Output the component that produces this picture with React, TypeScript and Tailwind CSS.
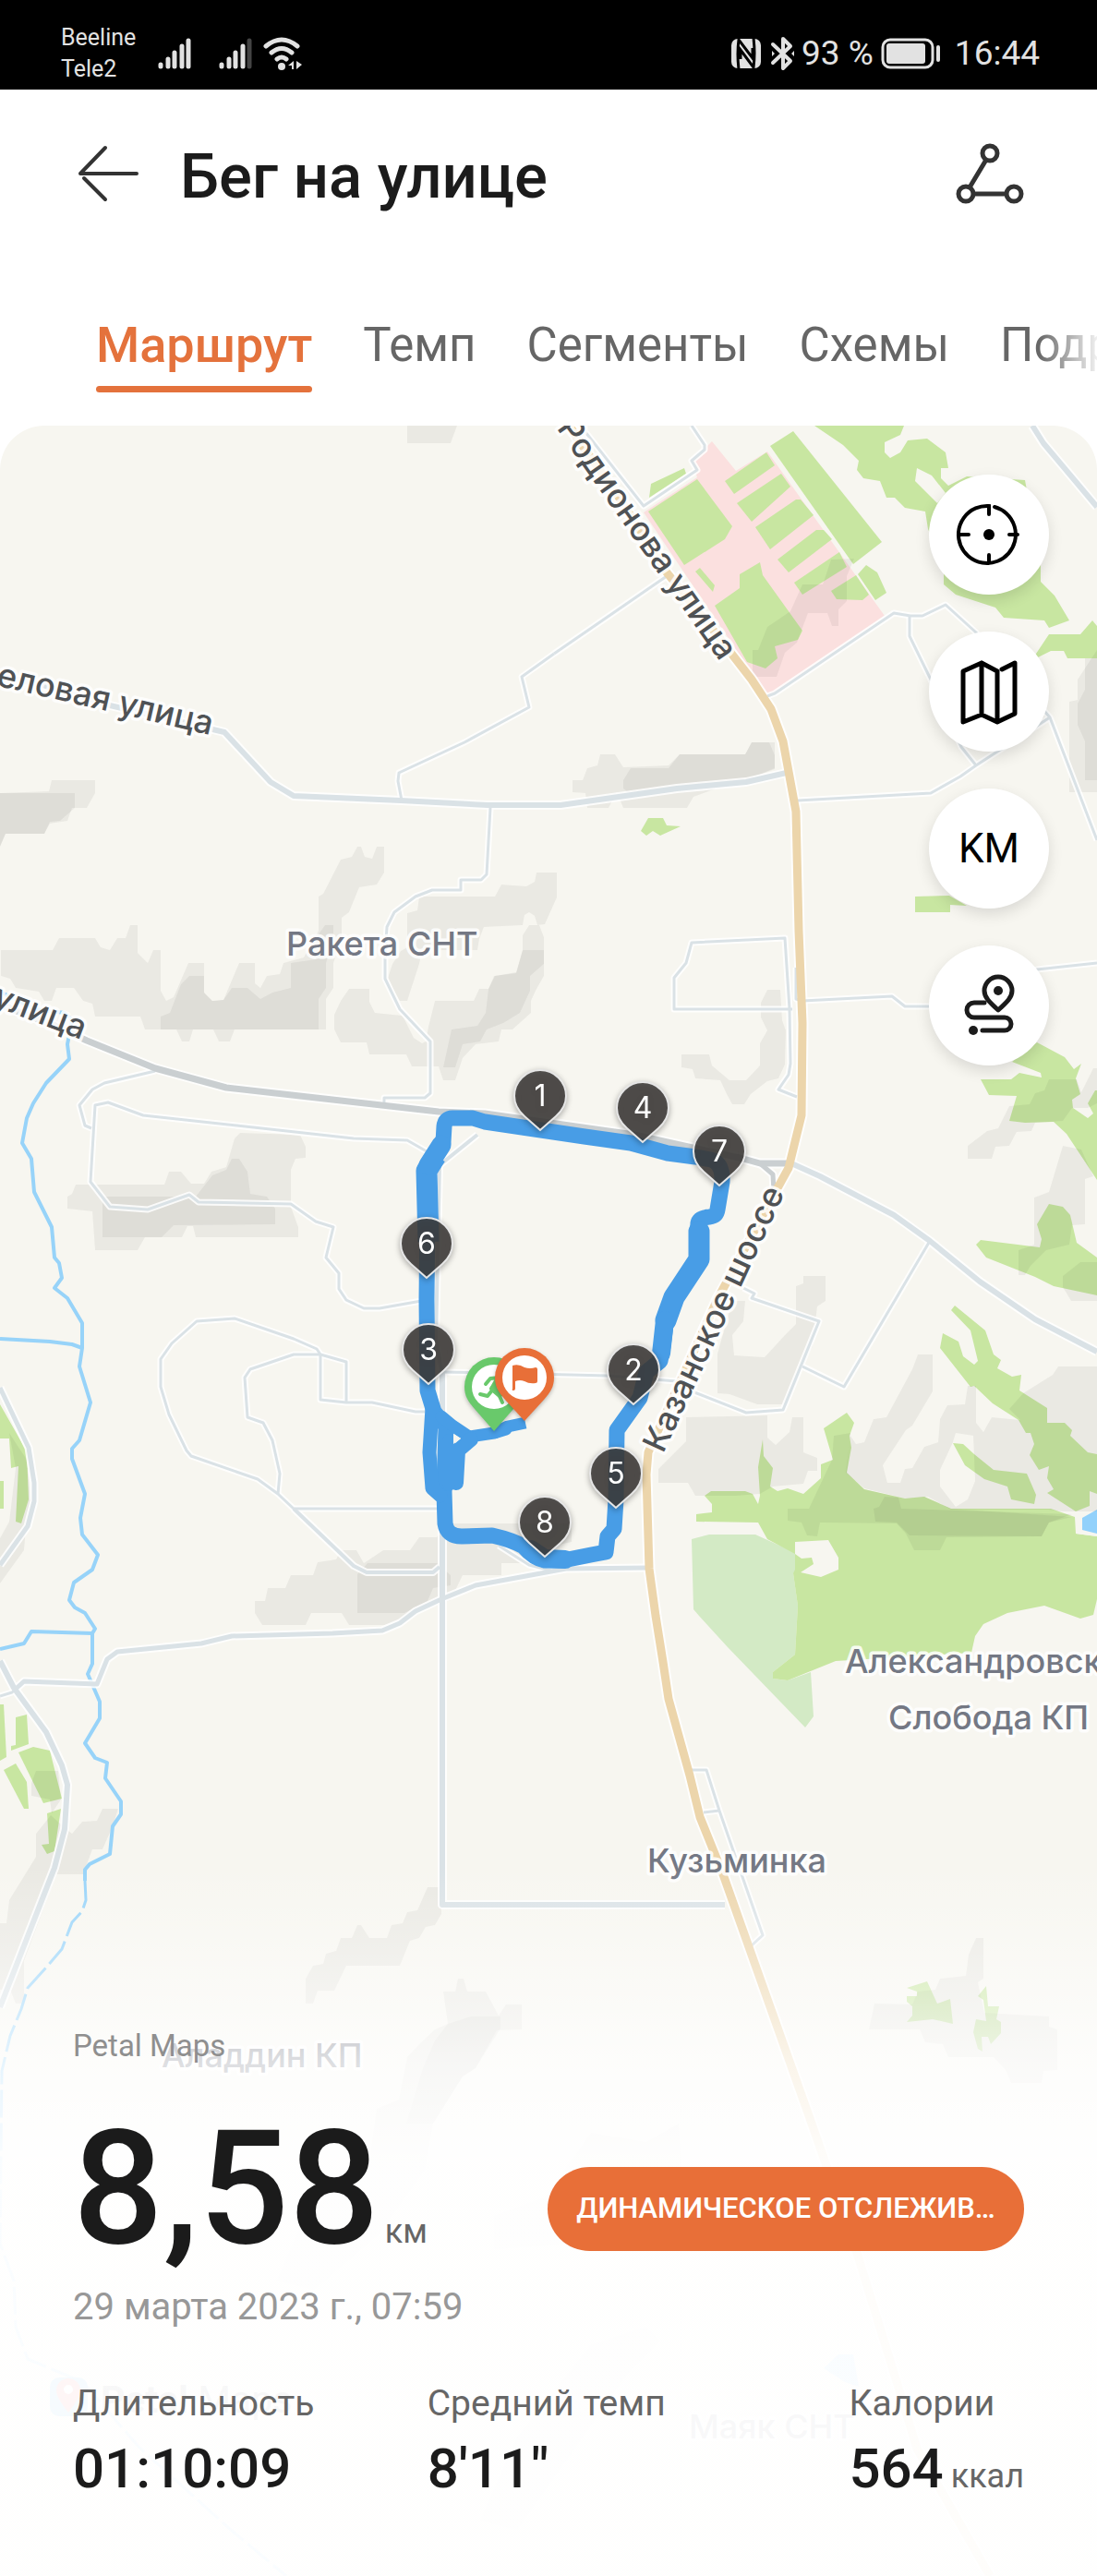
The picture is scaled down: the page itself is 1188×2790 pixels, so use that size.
import React from "react";

type Road = { points: string; width: number; color: string };

const MINOR = "#dae2e6";
const GRAY = "#cacfd1";
const TRUNK = "#ecd5ab";
const GREEN = "#c8e6a1";
const LAND = "#f7f6f0";

const parks: string[] = [
  "702,554 755,519 793,570 785,584 741,612",
  "703,539 705,524 741,507 743,513",
  "785,521 830,490 839,504 795,535",
  "798,545 846,513 856,527 814,565",
  "818,571 862,541 867,541 881,558 834,595",
  "842,606 884,574 892,574 901,584 854,620",
  "860,631 909,598 917,614 869,644",
  "900,640 927,623 941,644 934,650 906,649",
  "929,622 938,612 950,620 960,642 948,650",
  "834,483 859,467 955,587 924,611",
  "753,619 758,615 774,634 772,641",
  "774,656 801,637 801,622 823,609 826,623 869,683 864,693 839,700 842,713 829,724 809,717",
  "882,461 979,461 975,471 958,479 958,490 964,496 975,490 983,477 1004,475 1024,490 1027,507 1019,507 1019,518 1027,526 1047,516 1110,520 1127,614 1127,630 1142,645 1158,672 1136,680 1131,672 1087,669 1078,658 1035,644 1022,633 1022,610 1005,573 1002,554 980,550 969,539 960,539 953,521 935,518 928,509 930,499 913,482",
  "1120,711 1136,687 1170,687 1183,672 1188,678 1188,713 1156,713 1152,705 1138,705 1124,712",
  "694,900 702,886 718,886 722,894 737,895 715,905 707,900 700,905",
  "991,971 1028,970 1047,981 1029,980 1029,988 991,988",
  "0,1521 29,1572 31,1624 23,1650 17,1648 20,1588 12,1590 10,1558 0,1558",
  "0,1604 4,1604 4,1634 0,1634",
  "0,1846 4,1846 7,1903 0,1907",
  "17,1860 29,1857 31,1889 12,1896 12,1891 17,1890",
  "20,1898 36,1892 54,1896 67,1948 47,1953",
  "4,1917 17,1910 29,1930 31,1959 26,1959",
  "51,1964 66,1959 59,2005 51,2008 45,1998 53,1997",
  "1096,1150 1123,1129 1153,1145 1163,1158 1171,1152 1165,1168 1170,1185 1161,1191 1162,1200 1178,1211 1184,1206 1178,1195 1186,1181 1188,1181 1188,1278 1155,1228 1141,1215 1110,1216 1093,1214 1101,1187 1071,1186 1062,1169 1095,1169 1104,1162 1128,1167 1127,1162",
  "1057,1348 1062,1343 1126,1351 1128,1342 1123,1326 1136,1304 1151,1307 1159,1316 1166,1346 1188,1362 1188,1403 1141,1393 1121,1383 1068,1362",
  "1030,1419 1034,1414 1067,1441 1076,1467 1084,1473 1080,1482 1096,1491 1106,1489 1104,1506 1134,1525 1134,1541 1153,1541 1161,1549 1159,1555 1178,1573 1188,1575 1188,1618 1180,1615 1180,1631 1165,1637 1134,1617 1141,1613 1134,1601 1136,1588 1125,1592 1115,1576 1120,1564 1116,1552 1111,1552 1103,1538 1075,1520 1055,1501 1051,1502 1018,1460 1021,1444 1038,1453 1043,1469 1055,1478 1059,1474 1051,1441",
  "1032,1563 1043,1564 1055,1575 1076,1592 1112,1596 1122,1619 1120,1629 1095,1624 1091,1610 1066,1602 1045,1587",
  "763,1620 770,1615 807,1615 815,1618 821,1629 823,1620 821,1589 826,1559 827,1577 837,1590 834,1610 842,1615 853,1612 870,1618 889,1601 889,1586 902,1581 892,1547 917,1530 925,1541 920,1555 922,1568 917,1595 936,1613 980,1623 1001,1621 1030,1634 1138,1634 1164,1643 1165,1661 1188,1664 1188,1732 1184,1749 1170,1753 1131,1739 1091,1747 1065,1759 1056,1772 1052,1790 955,1796 905,1799 853,1820 837,1818 837,1811 861,1792 864,1739 859,1704 861,1700 861,1683 831,1667 821,1649 754,1648 754,1640 771,1638 771,1629",
  "982,2153 1004,2146 1015,2170 1029,2165 1032,2192 1010,2187 982,2190 988,2183 988,2173 982,2168 982,2162 993,2162 993,2157",
  "1059,2162 1068,2151 1070,2173 1082,2173 1079,2187 1084,2190 1084,2202 1073,2214 1070,2206 1063,2206 1064,2222 1059,2219 1054,2201 1057,2187 1068,2189 1065,2166",
];

const clearings: string[] = [
  "993,507 1009,515 1024,534 1015,545 991,521",
  "861,1670 897,1668 908,1687 908,1700 889,1708 867,1703 881,1694 879,1687 868,1688 861,1683",
];

const reliefs: string[] = [
  "441,461 495,461 488,480 441,480",
  "815,704 821,704 831,679 856,662 869,633 891,633 900,606 925,605 917,624 917,651 908,660 908,678 901,678 896,664 875,664 863,696 850,707 841,733 815,733",
  "1188,704 1167,736 1167,758 1158,760 1158,858 1188,858",
  "1175,713 1175,747 1167,762 1167,785 1175,803 1175,845 1188,845 1188,713",
  "620,845 631,845 636,832 647,829 650,817 666,817 675,831 724,829 736,817 807,817 814,804 839,804 839,833 802,847 770,856 751,863 744,875 675,875 668,858 659,875 636,875 634,859 620,858",
  "675,845 683,832 724,832 736,817 807,817 814,804 833,804 839,818 839,832 802,847 733,854 680,858 675,854",
  "56,845 103,845 103,859 94,875 78,875 73,889 54,892 48,903 6,903 0,917 0,859 53,857",
  "0,859 81,859 81,875 65,889 54,890 48,903 6,903 0,917 0,875",
  "1,1029 57,1029 64,1016 103,1016 109,1026 119,1029 127,1016 136,1016 141,1002 149,1002 149,1032 160,1043 166,1029 174,1029 174,1073 180,1084 188,1080 204,1043 221,1043 221,1075 230,1084 242,1083 259,1043 276,1043 276,1065 282,1070 289,1057 303,1055 307,1043 329,1037 345,1008 345,971 350,968 369,931 381,928 387,917 391,917 395,928 403,930 408,917 416,917 416,945 408,958 389,961 378,988 370,994 370,1017 361,1043 361,1070 353,1082 353,1115 254,1115 249,1128 237,1128 231,1115 209,1115 205,1128 197,1128 191,1115 157,1115 152,1101 103,1101 100,1087 90,1084 80,1070 61,1070 56,1084 48,1084 42,1074 17,1070 11,1060 1,1057",
  "174,1101 184,1097 196,1066 205,1057 221,1057 221,1075 230,1084 242,1083 251,1070 268,1070 282,1082 295,1075 315,1070 315,1043 342,1039 342,1016 352,1002 361,1002 361,1017 353,1043 353,1070 345,1082 345,1115 174,1115",
  "441,989 452,986 454,971 536,971 543,958 570,960 579,955 581,945 603,945 603,972 590,1001 582,1002 579,992 573,988 568,991 566,1002 524,1004 519,1017 517,1029 457,1029 454,1044 441,1084 433,1084 425,1071 420,1059 425,1044 434,1030 441,1026",
  "566,1029 566,1013 573,1002 584,1002 589,1015 589,1057 580,1073 575,1084 575,1097 555,1115 543,1115 540,1128 515,1131 501,1146 493,1170 480,1170 475,1155 446,1155 440,1142 400,1142 397,1129 369,1129 362,1115 362,1099 369,1084 378,1071 400,1071 400,1085 406,1097 436,1100 448,1124 457,1130 461,1128 464,1112 471,1084 513,1084 519,1071 529,1071 535,1057 559,1054",
  "566,1029 589,1029 589,1044 574,1057 574,1073 563,1097 545,1108 527,1115 520,1128 501,1131 493,1156 480,1156 489,1115 517,1111 526,1097 529,1071 536,1057 559,1053",
  "831,1072 845,1072 847,1105 851,1116 850,1153 843,1168 831,1171 813,1185 806,1196 793,1196 787,1185 780,1170 753,1168 750,1158 738,1156 738,1142 768,1142 771,1154 790,1170 808,1170 823,1154 823,1130 831,1116 824,1102 824,1086",
  "73,1296 78,1293 82,1283 178,1283 183,1269 196,1269 207,1282 221,1282 229,1269 245,1264 254,1233 260,1227 325,1229 331,1242 331,1254 320,1255 315,1267 315,1307 323,1329 323,1340 212,1340 209,1328 203,1328 197,1340 157,1340 149,1354 103,1354 100,1312 73,1309",
  "111,1296 212,1296 230,1273 245,1267 251,1255 259,1255 268,1269 271,1293 289,1296 298,1309 298,1326 188,1327 175,1340 111,1340",
  "10,1552 29,1581 33,1626 28,1655 26,1679 0,1715 0,1666 10,1648 17,1590",
  "276,1734 287,1734 290,1720 309,1720 315,1706 339,1706 344,1692 364,1689 369,1679 386,1679 394,1693 415,1679 444,1679 454,1665 473,1665 482,1650 619,1650 619,1670 574,1680 574,1693 543,1693 543,1706 501,1706 488,1733 444,1750 417,1760 378,1760 370,1747 337,1747 331,1760 284,1760 276,1747",
  "387,1705 387,1747 438,1747 463,1734 469,1720 488,1717 488,1706 473,1693 398,1693",
  "39,1918 63,1918 66,1949 56,1964 54,1949 34,1945 34,1931",
  "55,1966 66,1976 78,1986 89,1973 105,1972 111,1959 128,1959 122,1978 111,2003 100,2003 90,2030 61,2030 26,2124 26,2170 17,2170 11,2155 0,2155 0,2083 7,2083 10,2058 39,2011 39,1986",
  "463,2044 478,2044 478,2073 471,2085 461,2087 454,2099 444,2102 433,2129 375,2129 362,2156 344,2156 339,2170 331,2170 331,2143 339,2129 350,2127 353,2116 364,2113 369,2099 381,2099 387,2085 391,2085 400,2099 419,2099 424,2085 436,2083 441,2071 452,2069",
  "480,2157 493,2157 496,2143 502,2143 506,2157 526,2157 540,2183 548,2171 565,2171 565,2198 538,2199 515,2240 501,2249 469,2300 460,2350 410,2420 340,2480 300,2470 330,2400 400,2340 408,2284 432,2274 441,2228 455,2213 471,2198 485,2192",
  "485,2192 510,2184 542,2184 542,2197 515,2240 501,2249 469,2300 440,2300 458,2240 471,2210",
  "1048,1241 1069,1225 1081,1222 1093,1198 1115,1196 1121,1184 1131,1181 1136,1169 1166,1169 1171,1183 1184,1157 1188,1157 1188,1195 1178,1200 1161,1200 1151,1214 1121,1216 1117,1225 1101,1226 1093,1241 1078,1242 1074,1255 1048,1255",
  "1151,1241 1171,1245 1184,1274 1175,1277 1175,1326 1161,1327 1158,1348 1133,1354 1116,1371 1110,1381 1103,1381 1103,1354 1120,1348 1120,1297 1136,1291",
  "1151,1382 1170,1367 1188,1367 1188,1409 1160,1409 1151,1394",
  "793,1409 807,1409 805,1431 793,1446 795,1468 828,1470 850,1446 862,1434 862,1393 870,1390 870,1382 894,1382 894,1409 885,1415 880,1458 867,1486 853,1521 820,1521 790,1510 777,1509 777,1466",
  "713,1591 743,1561 743,1535 788,1534 831,1533 831,1557 840,1565 855,1551 858,1535 870,1535 870,1573 885,1579 885,1593 875,1593 870,1607 837,1610 823,1618 797,1620 753,1620 745,1606 713,1606",
  "853,1634 876,1634 901,1581 903,1555 921,1552 917,1595 936,1613 980,1623 1001,1621 1030,1634 1161,1643 1136,1649 1128,1664 1025,1665 1018,1679 990,1679 981,1661 971,1650 888,1649 885,1664 874,1663 868,1649 853,1647",
  "946,1634 952,1632 958,1621 973,1622 976,1634 1161,1640 1136,1649 1128,1664 985,1663 971,1649 948,1648",
  "1057,2099 1065,2099 1065,2143 1059,2147 1066,2180 1136,2184 1136,2195 1145,2198 1145,2242 1130,2243 1128,2256 1095,2256 1089,2242 1076,2228 1027,2228 1021,2214 1002,2212 996,2198 941,2198 947,2170 988,2171 994,2157 1013,2155 1018,2143 1046,2140 1049,2117",
  "640,2310 700,2320 735,2300 738,2350 700,2360 620,2430 535,2436 535,2400 590,2380",
  "640,2540 700,2520 715,2535 680,2570 560,2740 520,2730 560,2640",
];

const reliefWithGap =
  "M994 1467H1010V1507L988 1544L981 1549L956 1587L961 1606H975L980 1591L988 1590L1001 1567L1016 1562L1018 1537L1026 1522L1045 1521L1048 1501H1057V1541L1065 1551L1074 1535L1105 1538L1093 1526L1108 1509L1140 1489L1146 1480H1188V1637H1150L1135 1635H1030L1005 1621L980 1623L936 1612L916 1595L921 1555L927 1564L936 1562L946 1537L960 1535L988 1483ZM1035 1552L1032 1562L1018 1592V1610L1035 1632L1048 1624L1056 1604L1054 1555Z";

const rivers: string[] = [
  "0,1074 38,1093 70,1097 78,1105 73,1131 75,1147 50,1173 36,1195 29,1211 24,1238 34,1255 37,1291 56,1329 59,1362 64,1368 67,1384 59,1395 73,1406 89,1433 89,1460 86,1480 98,1519 86,1560 78,1569 78,1580 92,1618 87,1644 89,1662 106,1684 100,1700 80,1714 75,1733 81,1741 92,1747 103,1764 100,1769 100,1802 95,1813 108,1843 108,1861 92,1888 103,1904 116,1909 114,1926 131,1951 131,1965 122,1978 119,2008 97,2019 92,2025 92,2037",
  "0,1450 54,1453 78,1456 89,1460",
  "0,1786 26,1780 34,1767 100,1769",
];

const fadingRiver =
  "92,2037 93,2058 89,2070 78,2082 67,2111 50,2131 30,2153 23,2176 11,2205 2,2243 0,2430 15,2470 17,2520 30,2555 90,2580 150,2650 250,2740 310,2790";

const roads: Road[] = [
  { points: "600,708 565,733 573,766 503,804 432,837 431,846 435,867", width: 3, color: MINOR },
  { points: "600,708 722,624", width: 3, color: MINOR },
  { points: "531,875 527,947 521,953 499,953 499,964 468,964 450,971 427,988 419,1004 417,1035 417,1060 433,1093 466,1128 466,1184 460,1189 416,1189 416,1194", width: 3, color: MINOR },
  { points: "634,468 697,548 755,509 749,499 763,487 763,482 749,461", width: 3, color: MINOR },
  { points: "831,754 839,751 968,664 986,667 999,667 1024,655 1057,685 1137,777 1188,910", width: 3, color: MINOR },
  { points: "985,667 985,689 1007,734 1041,809 1057,829", width: 3, color: MINOR },
  { points: "864,867 1008,859 1040,841 1057,829 1137,777", width: 3, color: MINOR },
  { points: "1118,461 1130,480 1188,549", width: 6, color: MINOR },
  { points: "863,1188 843,1180 854,1164 856,1152 855,1093 850,1016 749,1021 743,1043 730,1059 730,1093 858,1093", width: 3, color: MINOR },
  { points: "862,1048 862,1082 869,1084 966,1079 980,1090 1060,1090 1123,1050 1188,1043", width: 3, color: MINOR },
  { points: "168,1160 113,1173 100,1180 86,1197 92,1219 99,1222", width: 3, color: MINOR },
  { points: "462,1247 441,1235 383,1233 155,1208 117,1194 103,1197 98,1280 119,1307 160,1310 205,1294 215,1302 315,1304 342,1323 361,1329 353,1362 367,1379 367,1396 375,1408 394,1417 411,1417 462,1408", width: 3, color: MINOR },
  { points: "476,1634 318,1634 301,1618 279,1602 207,1577 202,1571 183,1532 174,1502 174,1472 186,1455 213,1431 254,1428 318,1450 343,1461 347,1467 375,1475 375,1519", width: 3, color: MINOR },
  { points: "318,1634 383,1696 397,1703 469,1703 476,1697", width: 4, color: MINOR },
  { points: "301,1618 303,1596 295,1560 285,1541 268,1535 265,1492 271,1483 318,1467 347,1467 347,1516 375,1519 403,1519 450,1529 463,1529", width: 3, color: MINOR },
  { points: "475,1486 536,1487 658,1490 733,1496 752,1508 808,1530 848,1527 887,1431 814,1406 817,1401 805,1395", width: 3, color: MINOR },
  { points: "869,1480 914,1502 1007,1344", width: 3, color: MINOR },
  { points: "517,1229 476,1262 472,1452 479,1490", width: 4, color: MINOR },
  { points: "479,1486 479,2063 785,2063", width: 6, color: MINOR },
  { points: "540,1674 573,1695 597,1701", width: 3, color: MINOR },
  { points: "0,1837 13,1833 26,1821", width: 3, color: MINOR },
  { points: "15,1831 26,1821 105,1824 116,1797 127,1789 218,1780 251,1772 360,1769 414,1766 433,1758 450,1745 478,1732 515,1717 613,1699 703,1698", width: 5, color: MINOR },
  { points: "0,1503 31,1568 37,1606 37,1626 30,1653 0,1695", width: 5, color: MINOR },
  { points: "0,1799 15,1828 50,1876 67,1912 73,1933 70,1981 59,2023 0,2174", width: 6, color: MINOR },
  { points: "749,1917 765,1917 779,1961 826,2096 814,2107", width: 3, color: MINOR },
  { points: "762,1963 779,1961", width: 3, color: MINOR },
  { points: "0,732 46,742 119,764 197,782 243,793 293,847 318,862 434,867 528,872 607,872 733,854 808,847 856,836", width: 6, color: MINOR },
  { points: "857,1260 888,1274 968,1316 1007,1344 1061,1388 1121,1429 1188,1464", width: 6, color: MINOR },
  { points: "823,1260 837,1272 838,1290", width: 5, color: GRAY },
  { points: "0,1088 57,1110 94,1127 168,1157 245,1178 475,1204 525,1206 687,1229 805,1255 823,1260 857,1260", width: 7, color: GRAY },
  { points: "613,455 628,479 668,535 722,620 772,682 814,736 835,768 848,803 855,841 862,879 865,1008 869,1108 868,1208 854,1265 838,1294 777,1407 702,1573 700,1597 703,1699 710,1750 718,1800 724,1840 747,1923 758,1968 783,2030 879,2300 928,2440 977,2599 993,2652 1072,2790", width: 9, color: TRUNK },
];

const splits: { n: number; x: number; y: number }[] = [
  { n: 6, x: 462, y: 1384 },
  { n: 1, x: 585, y: 1224 },
  { n: 4, x: 696, y: 1237 },
  { n: 7, x: 779, y: 1284 },
  { n: 3, x: 464, y: 1499 },
  { n: 2, x: 686, y: 1521 },
  { n: 5, x: 667, y: 1633 },
  { n: 8, x: 590, y: 1686 },
];

const places: { name: string; x: number; y: number }[] = [
  { name: "Ракета СНТ", x: 310, y: 1035 },
  { name: "Александровская", x: 915, y: 1812 },
  { name: "Слобода КП", x: 962, y: 1873 },
  { name: "Кузьминка", x: 701, y: 2028 },
  { name: "Аладдин КП", x: 175, y: 2239 },
  { name: "Маяк СНТ", x: 746, y: 2641 },
];

const streets: { name: string; x: number; y: number; angle: number; anchor: "start" | "end" }[] = [
  { name: "Деловая улица", x: 228, y: 796, angle: 13, anchor: "end" },
  { name: "улица", x: 88, y: 1126, angle: 21, anchor: "end" },
  { name: "Родионова улица", x: 780, y: 717, angle: 55, anchor: "end" },
  { name: "Казанское шоссе", x: 718, y: 1575, angle: -65, anchor: "start" },
];

function RouteMap() {
  return (
    <svg
      className="absolute inset-0 h-full w-full"
      viewBox="0 461 1188 2329"
      preserveAspectRatio="xMidYMin slice"
      role="img"
      aria-label="Карта маршрута"
    >
      <rect x="0" y="461" width="1188" height="2329" fill={LAND} />
      <polygon points="749,1667 768,1662 818,1662 862,1682 868,1688 879,1687 881,1694 867,1700 859,1704 864,1739 861,1792 837,1811 837,1818 853,1820 878,1811 881,1859 872,1871 788,1784 757,1750 751,1743" fill="#d3eac5" />
      <polygon points="771,478 797,510 831,489 958,667 839,750 831,754 697,555 755,517 749,499 763,486" fill="#fbe0df" />
      {parks.map((p) => <polygon key={p} points={p} fill={GREEN} />)}
      {clearings.map((p) => <polygon key={p} points={p} fill={LAND} />)}
      <polygon points="1165,1644 1188,1632 1188,1664 1165,1661" fill={LAND} />
      <polygon points="1172,1644 1188,1635 1188,1661 1172,1657" fill="#92d1fb" />
      <polygon points="892,2565 908,2550 924,2550 930,2585 915,2580" fill="#92d1fb" />
      {reliefs.map((p) => <polygon key={p} points={p} fill="#000" fillOpacity="0.05" />)}
      <path d={reliefWithGap} fill="#000" fillOpacity="0.05" fillRule="evenodd" />

      <g fill="none" stroke="#97d3f9" strokeWidth="4" strokeLinejoin="round">
        {rivers.map((p) => <polyline key={p} points={p} />)}
        <polyline points={fadingRiver} strokeWidth="3" strokeDasharray="30 6" />
      </g>
      <g fill="none" strokeLinejoin="round">
        {roads.map((r) => (
          <polyline key={r.points} points={r.points} stroke="#fff" strokeWidth={r.width + 4} strokeOpacity="0.85" />
        ))}
        {roads.map((r) => (
          <polyline key={r.points} points={r.points} stroke={r.color} strokeWidth={r.width} />
        ))}
      </g>

      <g fontFamily="Inter, sans-serif" fontSize="36" fontWeight="500" className="[paint-order:stroke]" stroke="#fff" strokeWidth="7" strokeLinejoin="round" strokeOpacity="0.85">
        {streets.map((s) => (
          <text key={s.name} transform={`translate(${s.x} ${s.y}) rotate(${s.angle})`} textAnchor={s.anchor} fill="#4f5255">
            {s.name}
          </text>
        ))}
        {places.map((p) => (
          <text key={p.name} x={p.x} y={p.y} fill="#747884">{p.name}</text>
        ))}
      </g>
      <g>
        <rect x="54" y="2575" width="41" height="42" rx="10" fill="#4db7ef" />
        <path d="M74 2613c-9-12-13-18-13-24a13 13 0 0 1 26 0c0 6-4 12-13 24Z" fill="#f04b4b" />
        <circle cx="74" cy="2588" r="5" fill="#fff" />
        <text x="109" y="2613" fontSize="41" fontFamily="Roboto, sans-serif" fill="#6b6d70">
          <tspan fontWeight="700">Petal</tspan> Maps
        </text>
      </g>

      <g fill="none" stroke="#489de6" strokeLinejoin="round" strokeLinecap="round">
        <path strokeWidth="17" d="M782 1280L777 1310Q776 1317 768 1318Q757 1319 756 1325L755 1340L757 1367L733 1403L722 1427L718 1458L715 1474L700 1486L693 1514L668 1549L667 1624L665 1656L658 1664L656 1681L640 1684L610 1690L590 1690Q578 1688 567 1675Q555 1668 533 1663L500 1664Q484 1664 482 1650L481 1616L483 1545L470 1529L463 1506L462 1407L463 1316L462 1266L480 1237L481 1220Q482 1211 490 1211L512 1211L525 1215L633 1231L683 1238L723 1249L753 1253L770 1256Q783 1260 782 1280Z" />
        <path strokeWidth="23" strokeLinecap="butt" d="M464 1345L462 1268L472 1252" />
        <path strokeWidth="21" d="M464 1262L478 1240" />
        <path strokeWidth="23" d="M757 1334L757 1364L730 1405L721 1430" />
        <path strokeWidth="20" d="M720 1430L716 1466" />
        <path strokeWidth="20" d="M575 1678L590 1688L612 1689" />
        <path strokeWidth="15" d="M468 1525L465 1573L468 1612L477 1620" />
        <path strokeWidth="13" d="M478 1534L490 1544L508 1556L535 1552L548 1548" />
        <path strokeWidth="16" d="M510 1559L496 1571L494 1606" />
        <path strokeWidth="14" d="M486 1560V1608" />
        <path strokeWidth="13" strokeLinecap="butt" d="M535 1552L550 1545L569 1541" />
      </g>
      <path d="M491 1553l8 5l-8 6Z" fill={LAND} />

      <g className="[filter:drop-shadow(0_2px_3px_rgba(0,0,0,0.35))]">
        {splits.map((s) => (
          <g key={s.n} transform={`translate(${s.x} ${s.y})`}>
            <path
              d="M0 0L-17 -15C-25 -22 -28 -29 -28 -37A28 28 0 0 1 28 -37C28 -29 25 -22 17 -15Z"
              fill="#3b3937"
              fillOpacity="0.86"
              stroke="#e6e6e6"
              strokeWidth="2"
            />
            <text y="-26" textAnchor="middle" fontFamily="Inter, sans-serif" fontSize="32" fill="#fff">{s.n}</text>
          </g>
        ))}
      </g>
      <g className="[filter:drop-shadow(0_2px_2px_rgba(0,0,0,0.25))]" transform="translate(535 1502)">
        <path d="M0 48L-21 24C-28 16 -32 10 -32 0A32 32 0 0 1 32 0C32 10 28 16 21 24Z" fill="#69c96b" />
        <circle r="24" fill="#fff" />
        <g fill="none" stroke="#69c96b" strokeWidth="4" strokeLinecap="round" strokeLinejoin="round">
          <path d="M-9 -3L-4 -9L6 -10L-3 2L5 8L9 17" />
          <path d="M-15 8L-7 10L-3 5" />
          <path strokeWidth="7" d="M4 -7L-1 2L6 8" />
        </g>
      </g>
      <g className="[filter:drop-shadow(0_2px_2px_rgba(0,0,0,0.25))]" transform="translate(568 1492)">
        <path d="M0 47L-21 24C-28 16 -32 10 -32 0A32 32 0 0 1 32 0C32 10 28 16 21 24Z" fill="#e86f38" />
        <circle r="24" fill="#fff" />
        <path d="M-13 -13Q-6 -15 0 -11Q6 -9 12 -11Q14 -11 14 -9V4Q14 6 12 6Q5 7 0 4Q-5 2 -10 4V12Q-10 14 -12 14T-13 12Z" fill="#e86f38" />
      </g>
    </svg>
  );
}

function Signal({ dim = false }: { dim?: boolean }) {
  return (
    <svg viewBox="0 0 36 34" className="h-[34px] w-9" aria-hidden="true">
      <g stroke="#e2e2e2" strokeWidth="5" strokeLinecap="round">
        <path d="M3 29V31M11 23V31M18 16V31M26 9V31" />
        <path d="M33 3V31" stroke={dim ? "#444" : "#e2e2e2"} />
      </g>
    </svg>
  );
}

function StatusBar() {
  return (
    <div className="flex h-[97px] items-center bg-black pl-[66px] pr-[62px] pt-[18px] text-[#e2e2e2]">
      <div className="text-[25px] leading-[34px]">
        <div>Beeline</div>
        <div>Tele2</div>
      </div>
      <div className="ml-6 flex items-center">
        <Signal />
        <div className="ml-[30px]"><Signal dim /></div>
        <svg viewBox="0 0 44 36" className="ml-3 h-9 w-11" fill="none" stroke="#e2e2e2" strokeWidth="5" strokeLinecap="round" aria-hidden="true">
          <path d="M3 10Q20 -4 37 10M9 17Q20 8 31 17M15 24Q20 20 25 24" />
          <circle cx="20" cy="32" r="4" fill="#e2e2e2" stroke="none" />
          <path d="M27 31L33 26V35H31V31ZM36 26V35L42 30Z" fill="#e2e2e2" stroke="none" />
        </svg>
      </div>
      <div className="ml-auto flex items-center text-[37px] leading-10">
        <svg viewBox="0 0 32 32" className="h-8 w-8" aria-hidden="true">
          <rect width="32" height="32" rx="7" fill="#e2e2e2" />
          <path d="M8 33Q6 16 8 1L23 21V10M24 -1Q26 16 24 31L10 12V22" fill="none" stroke="#000" strokeWidth="3" />
        </svg>
        <svg viewBox="0 0 28 38" className="ml-[10px] h-[38px] w-7" fill="none" stroke="#e2e2e2" strokeWidth="4" strokeLinejoin="round" strokeLinecap="round" aria-hidden="true">
          <path d="M3 9L22 27L14 35V3L22 11L3 29" />
          <path d="M2 16V22L5 19ZM26 16V22L23 19Z" fill="#e2e2e2" stroke="none" />
        </svg>
        <span className="ml-1.5">93 %</span>
        <svg viewBox="0 0 66 34" className="ml-2 h-[34px] w-[66px]" aria-hidden="true">
          <rect x="2" y="2" width="54" height="30" rx="8" fill="none" stroke="#e2e2e2" strokeWidth="3" />
          <rect x="6" y="6" width="42" height="22" rx="3" fill="#e2e2e2" />
          <path d="M62 10V24" stroke="#e2e2e2" strokeWidth="4" strokeLinecap="round" />
        </svg>
        <span className="ml-3.5">16:44</span>
      </div>
    </div>
  );
}

function Header() {
  return (
    <header className="flex h-[182px] items-center pl-[84px] pr-[79px]">
      <button type="button" aria-label="Назад" className="flex">
        <svg viewBox="0 0 66 64" className="h-16 w-[66px]" fill="none" stroke="#333" strokeWidth="4" strokeLinecap="round" strokeLinejoin="round" aria-hidden="true">
          <path d="M64 32H3L30 4M7 37L30 60" />
        </svg>
      </button>
      <h1 className="ml-[45px] pt-1.5 text-[67px] font-medium leading-[76px] text-[#1b1b1b]">Бег на улице</h1>
      <button type="button" aria-label="Поделиться" className="ml-auto flex">
        <svg viewBox="0 0 74 66" className="h-[66px] w-[74px]" fill="none" stroke="#333" strokeWidth="5" aria-hidden="true">
          <circle cx="37" cy="11" r="8" />
          <circle cx="11" cy="55" r="8" />
          <circle cx="63" cy="55" r="8" />
          <path d="M33 18L15 48M19 55H55" />
        </svg>
      </button>
    </header>
  );
}

const tabs = ["Маршрут", "Темп", "Сегменты", "Схемы", "Подробнее"];

function Tabs() {
  return (
    <nav className="relative h-[182px] overflow-hidden">
      <ul className="flex h-[146px] items-end gap-[55px] pl-[104px] text-[51px] leading-[62px]">
        {tabs.map((t, i) => (
          <li key={t} className="shrink-0">
            {i === 0 ? (
              <a href="#" aria-current="page" className="block text-[#e4723c]">
                <span className="block pb-[13px] text-[54px] font-medium leading-[62px]">{t}</span>
                <span className="block h-[7px] rounded-full bg-[#e4723c]" />
              </a>
            ) : (
              <a href="#" className="block pb-5 text-[#666]">{t}</a>
            )}
          </li>
        ))}
      </ul>
      <div className="pointer-events-none absolute inset-y-0 right-0 w-16 bg-linear-to-r from-white/0 to-white/90" />
    </nav>
  );
}

function MapButton({ label, children }: { label: string; children: React.ReactNode }) {
  return (
    <button
      type="button"
      aria-label={label}
      className="flex size-[130px] items-center justify-center rounded-full bg-white text-[44px] leading-none text-black shadow-[0_6px_16px_rgba(0,0,0,0.12)]"
    >
      {children}
    </button>
  );
}

function MapControls() {
  return (
    <div className="relative mr-[52px] mt-[53px] flex flex-col gap-10 self-end">
      <MapButton label="Центрировать">
        <svg viewBox="0 0 130 130" className="size-full" fill="none" stroke="#000" strokeWidth="4" strokeLinecap="round" aria-hidden="true">
          <path d="M71 35A31 31 0 1 1 65 34V43M34 65H43M96 65H87M65 96V87" />
          <circle cx="65" cy="65" r="6" fill="#000" stroke="none" />
        </svg>
      </MapButton>
      <MapButton label="Слой карты">
        <svg viewBox="0 0 130 130" className="size-full" fill="none" stroke="#000" strokeWidth="5" strokeLinecap="round" strokeLinejoin="round" aria-hidden="true">
          <path d="M57 34V90M74 43V97M74 43L57 34L37 43V98L57 90L74 98L93 89V34L79 41" />
        </svg>
      </MapButton>
      <MapButton label="Отметки километров">KM</MapButton>
      <MapButton label="Стиль маршрута">
        <svg viewBox="0 0 130 130" className="size-full" fill="none" stroke="#1b1b1b" strokeWidth="5" strokeLinecap="round" strokeLinejoin="round" aria-hidden="true">
          <path d="M75 70C65 61 60 56 60 49A15 15 0 0 1 90 49C90 56 85 61 75 70Z" />
          <circle cx="75" cy="49" r="5" fill="#1b1b1b" stroke="none" />
          <path d="M60 62H49A8 8 0 0 0 49 78H82A7 7 0 0 1 82 92H58" />
          <circle cx="48" cy="92" r="5" fill="#1b1b1b" stroke="none" />
        </svg>
      </MapButton>
    </div>
  );
}

function Summary() {
  return (
    <section className="relative px-[79px] pb-[70px] text-[#1b1b1b]">
      <p className="text-[33px] leading-10 text-[#8f8f8f]">Petal Maps</p>
      <div className="mt-[46px] flex items-end justify-between">
        <div className="flex items-baseline">
          <span className="text-[172px] font-medium leading-[176px]">8,58</span>
          <span className="ml-1.5 text-[36px] leading-10 text-[#666]">км</span>
        </div>
        <button type="button" className="mb-5 h-[91px] w-[516px] rounded-full bg-[#e86f38] text-[31px] font-medium text-white">
          ДИНАМИЧЕСКОЕ ОТСЛЕЖИВ…
        </button>
      </div>
      <p className="mt-4 text-[40px] leading-[50px] text-[#989898]">29 марта 2023 г., 07:59</p>
      <dl className="mt-[54px] grid grid-cols-[384fr_457fr_auto]">
        <div>
          <dt className="text-[39px] leading-[50px] text-[#666]">Длительность</dt>
          <dd className="mt-2 text-[60px] font-medium leading-[76px]">01:10:09</dd>
        </div>
        <div>
          <dt className="text-[39px] leading-[50px] text-[#666]">Средний темп</dt>
          <dd className="mt-2 text-[60px] font-medium leading-[76px]">8'11"</dd>
        </div>
        <div>
          <dt className="text-[39px] leading-[50px] text-[#666]">Калории</dt>
          <dd className="mt-2 flex items-baseline text-[60px] font-medium leading-[76px]">
            564<span className="ml-2 text-[36px] font-normal text-[#666]">ккал</span>
          </dd>
        </div>
      </dl>
    </section>
  );
}

export default function App() {
  return (
    <div className="flex min-h-screen flex-col bg-white font-['Roboto',sans-serif]">
      <StatusBar />
      <Header />
      <Tabs />
      <main className="relative flex flex-1 flex-col justify-between gap-40 overflow-hidden rounded-t-[48px]">
        <RouteMap />
        <div className="pointer-events-none absolute inset-x-0 bottom-0 h-[770px] bg-linear-to-b from-white/0 via-white/76 via-[28%] to-white/95 to-[42%]" />
        <MapControls />
        <Summary />
      </main>
    </div>
  );
}
